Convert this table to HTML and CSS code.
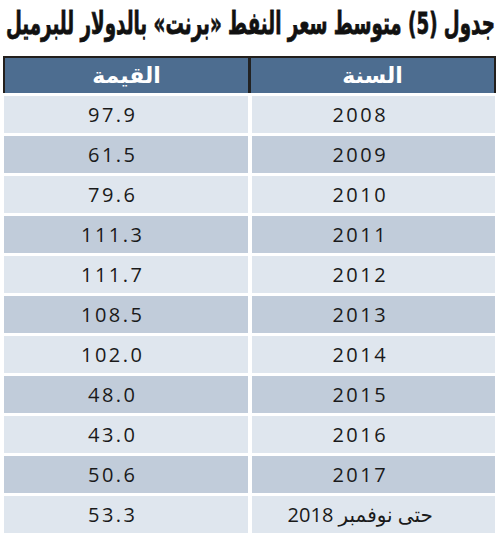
FILE: index.html
```html
<!DOCTYPE html>
<html lang="ar" dir="rtl">
<head>
<meta charset="utf-8">
<link rel="stylesheet" href="styles.css">
</head>
<body>
<h1 class="title"><span class="title-text">جدول (5) متوسط سعر النفط «برنت» بالدولار للبرميل</span></h1>
<div class="table">
  <div class="head">
    <div class="hcell">السنة</div>
    <div class="hcell">القيمة</div>
  </div>
  <div class="row light"><div class="cell">2008</div><div class="cell">97.9</div></div>
  <div class="row dark"><div class="cell">2009</div><div class="cell">61.5</div></div>
  <div class="row light"><div class="cell">2010</div><div class="cell">79.6</div></div>
  <div class="row dark"><div class="cell">2011</div><div class="cell">111.3</div></div>
  <div class="row light"><div class="cell">2012</div><div class="cell">111.7</div></div>
  <div class="row dark"><div class="cell">2013</div><div class="cell">108.5</div></div>
  <div class="row light"><div class="cell">2014</div><div class="cell">102.0</div></div>
  <div class="row dark"><div class="cell">2015</div><div class="cell">48.0</div></div>
  <div class="row light"><div class="cell">2016</div><div class="cell">43.0</div></div>
  <div class="row dark"><div class="cell">2017</div><div class="cell">50.6</div></div>
  <div class="row light"><div class="cell">حتى نوفمبر 2018</div><div class="cell">53.3</div></div>
</div>
</body>
</html>
```

FILE: styles.css
```css
html, body {
  margin: 0;
  padding: 0;
  background: #ffffff;
}
body {
  width: 500px;
  height: 543px;
  overflow: hidden;
}
.title {
  margin: 0;
  padding: 3px 0 0 0;
  height: 54px;
  box-sizing: border-box;
  font-family: "DejaVu Sans", sans-serif;
  font-weight: bold;
  font-size: 31px;
  line-height: 40px;
  color: #111;
  text-align: center;
  white-space: nowrap;
  display: flex;
  justify-content: center;
  overflow: visible;
}
.title-text {
  display: inline-block;
  transform: scaleX(0.59);
  transform-origin: center;
  -webkit-text-stroke: 0.8px #111;
}
.table {
  margin: 2px 4px 0 3px;
  display: flex;
  flex-direction: column;
  gap: 3px;
}
.head {
  display: grid;
  grid-template-columns: 1fr 1fr;
  background: #222;
  border: 2px solid #231f1c;
  border-bottom: none;
  gap: 3px;
  height: 37px;
  box-sizing: border-box;
}
.hcell {
  background: #4d6d90;
  color: #fff;
  font-family: "DejaVu Sans", sans-serif;
  font-weight: bold;
  font-size: 22px;
  display: flex;
  align-items: center;
  justify-content: center;
}
.row {
  display: grid;
  grid-template-columns: 1fr 1fr;
  gap: 4px;
  height: 37px;
  margin: 0 1px 0 1px;
}
.cell {
  display: flex;
  align-items: center;
  justify-content: center;
  padding-right: 26px;
  font-family: "Open Sans", "DejaVu Sans", sans-serif;
  font-size: 20px;
  font-weight: 500;
  letter-spacing: 2.5px;
  color: #1a1a1a;
}
.light .cell { background: #dfe6ee; }
.dark .cell { background: #c1ccda; }
```
